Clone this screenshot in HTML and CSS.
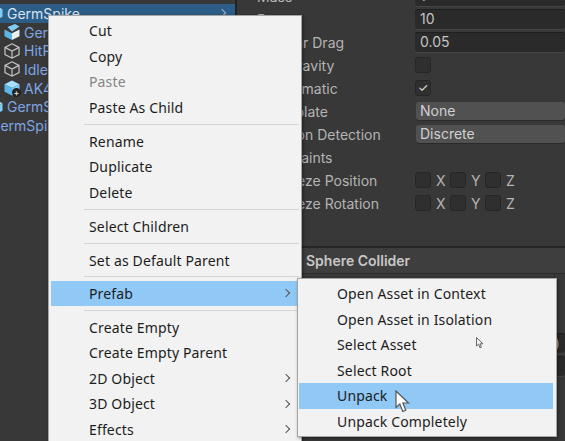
FILE: index.html
```html
<!DOCTYPE html>
<html lang="en">
<head>
    <meta charset="UTF-8">
    <title>Prefab menu</title>
    <link rel="stylesheet" href="styles.css">
</head>
<body>
    <svg class="defs" width="0" height="0">
        <symbol id="cube" viewBox="0 0 16 16">
            <path d="M8 .8 15 4.4V11.6L8 15.2 1 11.6V4.4ZM1 4.4 8 8 15 4.4M8 8V15.2" fill="none" stroke="#c6c6c6" stroke-width="1.2"/>
        </symbol>
        <symbol id="cube-blue" viewBox="0 0 16 16">
            <path d="M8 .5 15.5 4.3 8 8 .5 4.3Z" fill="#a9e0fb"/>
            <path d="M.5 4.3 8 8V15.5L.5 11.7Z" fill="#5cb6e8"/>
            <path d="M15.5 4.3 8 8V15.5L15.5 11.7Z" fill="#7fcdf4"/>
        </symbol>
        <symbol id="cube-open" viewBox="0 0 16 16">
            <path d="M.5 5.5 8 9.2V16L.5 12.2Z" fill="#5cb6e8"/>
            <path d="M15.5 5.5 8 9.2V16L15.5 12.2Z" fill="#e8eef2"/>
            <path d="M3.5 3 11 0 15.5 2.6 8 7.5Z" fill="#7fcdf4"/>
        </symbol>
    </svg>

    <div class="app">
        <div class="hierarchy">
            <div class="row selected root">
                <svg class="icon"><use href="#cube-blue"/></svg>
                <span>GermSpike</span>
                <span class="row-arrow"></span>
            </div>
            <div class="row child"><svg class="icon"><use href="#cube-open"/></svg><span>GermSpikeModel</span></div>
            <div class="row child"><svg class="icon"><use href="#cube"/></svg><span>HitPoint</span></div>
            <div class="row child"><svg class="icon"><use href="#cube"/></svg><span>IdlePoint</span></div>
            <div class="row child">
                <span class="icon-wrap">
                    <svg class="icon"><use href="#cube-blue"/></svg>
                    <span class="plus-badge">+</span>
                </span>
                <span>AK47</span>
            </div>
            <div class="row root"><svg class="icon"><use href="#cube-blue"/></svg><span>GermSpike</span></div>
            <div class="row scrolled"><span>GermSpike</span></div>
        </div>

        <div class="inspector">
            <div class="prop"><span class="prop-label">Mass</span><span class="field">1</span></div>
            <div class="prop"><span class="prop-label">Drag</span><span class="field">10</span></div>
            <div class="prop"><span class="prop-label">Angular Drag</span><span class="field">0.05</span></div>
            <div class="prop"><span class="prop-label">Use Gravity</span><span class="check"></span></div>
            <div class="prop"><span class="prop-label">Is Kinematic</span><span class="check">✓</span></div>
            <div class="prop"><span class="prop-label">Interpolate</span><span class="dropdown">None</span></div>
            <div class="prop"><span class="prop-label">Collision Detection</span><span class="dropdown">Discrete</span></div>
            <div class="prop constraints"><span class="prop-label">Constraints</span></div>
            <div class="prop">
                <span class="prop-label indent">Freeze Position</span>
                <span class="axes">
                    <span class="check"></span><span class="axis">X</span>
                    <span class="check"></span><span class="axis">Y</span>
                    <span class="check"></span><span class="axis">Z</span>
                </span>
            </div>
            <div class="prop">
                <span class="prop-label indent">Freeze Rotation</span>
                <span class="axes">
                    <span class="check"></span><span class="axis">X</span>
                    <span class="check"></span><span class="axis">Y</span>
                    <span class="check"></span><span class="axis">Z</span>
                </span>
            </div>
            <div class="component-head">Sphere Collider</div>
            <div class="component-body">
                <div class="prop"><span class="prop-label">Material</span><span class="field material">None (Physic Material)</span></div>
                <div class="prop"><span class="prop-label">Center</span><span class="field"></span></div>
            </div>
        </div>
    </div>

    <div class="menu main-menu">
        <div class="item">Cut</div>
        <div class="item">Copy</div>
        <div class="item disabled">Paste</div>
        <div class="item">Paste As Child</div>
        <div class="sep"></div>
        <div class="item">Rename</div>
        <div class="item">Duplicate</div>
        <div class="item">Delete</div>
        <div class="sep"></div>
        <div class="item">Select Children</div>
        <div class="sep"></div>
        <div class="item">Set as Default Parent</div>
        <div class="sep tight"></div>
        <div class="item active">Prefab<span class="arrow"></span></div>
        <div class="sep"></div>
        <div class="item">Create Empty</div>
        <div class="item">Create Empty Parent</div>
        <div class="item">2D Object<span class="arrow"></span></div>
        <div class="item">3D Object<span class="arrow"></span></div>
        <div class="item">Effects<span class="arrow"></span></div>
    </div>

    <div class="menu sub-menu">
        <div class="item">Open Asset in Context</div>
        <div class="item">Open Asset in Isolation</div>
        <div class="item">Select Asset</div>
        <div class="item">Select Root</div>
        <div class="item active">Unpack</div>
        <div class="item">Unpack Completely</div>
    </div>

    <svg class="cursor cursor-small" width="8" height="12" viewBox="0 0 8 12">
        <path d="M.5 .5V9L2.6 7.2 4 10.8 5.4 10.2 4 6.8H7Z" fill="#f2f2f2" stroke="#666"/>
    </svg>
    <svg class="cursor cursor-big" width="16" height="23" viewBox="0 0 16 23">
        <path d="M1 1V17.5L4.8 14 7.8 21.5 10.8 20.2 7.8 13H13.5Z" fill="#fff" stroke="#555" stroke-width="1.2"/>
    </svg>
</body>
</html>
```

FILE: styles.css
```css
html, body {
    margin: 0;
    height: 100%;
}
body {
    position: relative;
    width: 565px;
    height: 441px;
    overflow: hidden;
    background: #383838;
    font-family: "Inter", "Liberation Sans", sans-serif;
}
.defs {
    position: absolute;
}
.app {
    display: flex;
    height: 441px;
}

/* hierarchy */
.hierarchy {
    width: 235px;
    flex: none;
    padding-top: 4px;
    overflow: hidden;
    border-right: 2px solid #222;
    font-size: 14px;
    color: #7ea6e4;
}
.row {
    display: flex;
    align-items: center;
    gap: 4px;
    height: 18.7px;
    white-space: nowrap;
}
.row.selected {
    background: #2c5d87;
    color: #d5e3f2;
}
.row.root {
    margin-left: -13px;
}
.row.child {
    margin-left: 4px;
}
.row.scrolled {
    margin-left: -10px;
}
.row-arrow {
    width: 5px;
    height: 5px;
    margin-left: auto;
    margin-right: 10px;
    border-top: 1.5px solid #9db4c9;
    border-right: 1.5px solid #9db4c9;
    transform: rotate(45deg);
}
.icon {
    display: block;
    width: 16px;
    height: 16px;
    flex: none;
}
.icon-wrap {
    position: relative;
    flex: none;
}
.plus-badge {
    position: absolute;
    right: -1px;
    bottom: -1px;
    width: 9px;
    height: 9px;
    border-radius: 50%;
    background: #222;
    color: #eee;
    font-size: 9px;
    line-height: 9px;
    text-align: center;
}

/* inspector */
.inspector {
    flex: 1;
    margin-top: -14px;
    padding-left: 20px;
    font-size: 14px;
    color: #b4b4b4;
    min-width: 0;
}
.prop {
    display: flex;
    align-items: center;
    height: 20px;
    margin-bottom: 3px;
    white-space: nowrap;
}
.prop.constraints {
    margin-top: 3px;
}
.prop-label {
    width: 158px;
    flex: none;
    box-sizing: border-box;
}
.prop-label.indent {
    padding-left: 19px;
}
.field {
    flex: 1;
    height: 20px;
    line-height: 20px;
    padding-left: 5px;
    background: #2a2a2a;
    border-radius: 3px;
    box-shadow: inset 0 1px 0 #1f1f1f, 0 1px 0 #444;
    color: #c4c4c4;
    overflow: hidden;
}
.field.material {
    font-size: 13px;
}
.check {
    display: block;
    flex: none;
    width: 16px;
    height: 16px;
    background: #2f2f2f;
    border: 1px solid #262626;
    border-radius: 3px;
    box-sizing: border-box;
    color: #e0e0e0;
    font-size: 12px;
    line-height: 14px;
    text-align: center;
}
.dropdown {
    flex: 1;
    margin-left: 1px;
    height: 18px;
    line-height: 18px;
    padding-left: 4px;
    background: #515151;
    border-radius: 3px;
    box-shadow: 0 1px 0 #2a2a2a;
    color: #d0d0d0;
}
.axes {
    display: flex;
    align-items: center;
}
.axis {
    width: 19px;
    padding-left: 5px;
    box-sizing: border-box;
}
.component-head {
    margin-top: 33px;
    margin-left: -20px;
    height: 25px;
    line-height: 25px;
    padding-left: 69px;
    background: #3e3e3e;
    border-top: 2px solid #262626;
    border-bottom: 1px solid #2c2c2c;
    font-weight: 600;
    color: #c8c8c8;
}
.component-body {
    padding-top: 59px;
}

/* menus */
.menu {
    position: absolute;
    box-sizing: border-box;
    background: #f2f2f2;
    border: 1px solid #a6a6a6;
    box-shadow: 1px 1px 3px rgba(0, 0, 0, 0.45);
    font-family: "Noto Sans", "Liberation Sans", sans-serif;
    font-size: 14px;
    letter-spacing: 0.15px;
    color: #1c1c1c;
}
.main-menu {
    left: 48px;
    top: 15px;
    width: 254px;
    height: 440px;
    padding: 2px;
}
.sub-menu {
    left: 297px;
    top: 278px;
    width: 260px;
    height: 159px;
    padding: 2px 3px 2px 1px;
}
.item {
    display: flex;
    align-items: center;
    justify-content: space-between;
    height: 25.5px;
    padding-left: 38px;
    padding-right: 10px;
    white-space: nowrap;
}
.item.active {
    background: #90c8f6;
}
.item.disabled {
    color: #858585;
}
.arrow {
    width: 5px;
    height: 5px;
    border-top: 1.5px solid #555;
    border-right: 1.5px solid #555;
    transform: rotate(45deg);
}
.sep {
    height: 8.5px;
    margin-left: 33px;
    display: flex;
    align-items: center;
}
.sep.tight {
    height: 7.5px;
}
.sep::before {
    content: "";
    flex: 1;
    height: 1px;
    background: #d4d4d4;
}
.cursor {
    position: absolute;
}
.cursor-small {
    left: 476px;
    top: 337px;
}
.cursor-big {
    left: 395px;
    top: 390px;
}
```
